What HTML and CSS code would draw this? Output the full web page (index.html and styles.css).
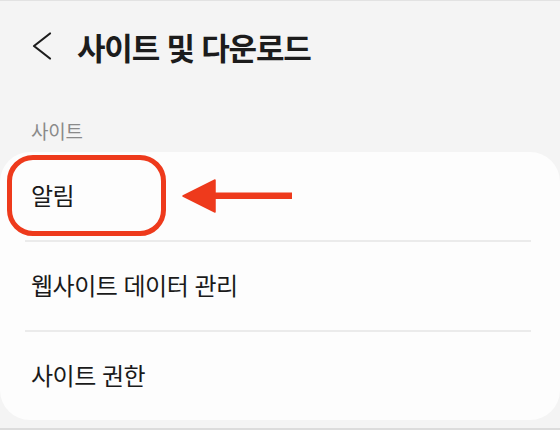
FILE: index.html
```html
<!DOCTYPE html>
<html lang="ko">
<head>
<meta charset="utf-8">
<link rel="stylesheet" href="styles.css">
</head>
<body>
<div class="page">
  <header class="header">
    <svg class="back" width="20" height="30" viewBox="0 0 20 30" aria-hidden="true">
      <path d="M18 2.5 L2 15 L18 27.5" fill="none" stroke="#1c1c1c" stroke-width="2.2" stroke-linecap="round" stroke-linejoin="round"/>
    </svg>
    <h1 class="title">사이트 및 다운로드</h1>
  </header>
  <div class="section-label">사이트</div>
  <div class="card">
    <div class="row">알림</div>
    <div class="divider"></div>
    <div class="row">웹사이트 데이터 관리</div>
    <div class="divider"></div>
    <div class="row">사이트 권한</div>
    <div class="highlight"></div>
    <svg class="arrow" width="115" height="40" viewBox="0 0 115 40" aria-hidden="true">
      <path d="M3 20 L35 4 L35 36 Z" fill="#ee3a1c" stroke="#ee3a1c" stroke-width="1.5" stroke-linejoin="round"/>
      <rect x="33" y="16.5" width="79" height="6.5" fill="#ee3a1c"/>
    </svg>
  </div>
  <div class="bottom-line"></div>
</div>
</body>
</html>
```

FILE: styles.css
```css
html, body {
  margin: 0;
  padding: 0;
  background: #f4f4f4;
}
body {
  width: 560px;
  height: 430px;
  overflow: hidden;
  font-family: "Noto Sans CJK KR", "Noto Sans", sans-serif;
  color: #1a1a1a;
}
.page {
  border-top: 1px solid #e2e2e2;
}
.header {
  display: flex;
  align-items: center;
  height: 90px;
  padding-left: 32px;
}
.back {
  display: block;
  flex: none;
}
.title {
  margin: 0 0 0 25px;
  font-size: 31px;
  font-weight: 700;
  letter-spacing: -1.2px;
  line-height: 1;
  color: #1c1c1c;
}
.section-label {
  margin-top: 30px;
  padding-left: 31px;
  font-size: 19px;
  line-height: 19px;
  color: #8a8a8a;
  letter-spacing: -0.2px;
}
.card {
  position: relative;
  margin-top: 12px;
  background: #fdfdfd;
  border-radius: 30px;
  height: 268px;
  display: flex;
  flex-direction: column;
}
.row {
  height: 88px;
  box-sizing: border-box;
  padding-bottom: 4px;
  display: flex;
  align-items: center;
  padding-left: 31px;
  font-size: 24px;
  letter-spacing: -0.5px;
  color: #1a1a1a;
}
.divider {
  height: 2px;
  margin: 0 29px 0 25px;
  background: #ebebeb;
}
.highlight {
  position: absolute;
  left: 7px;
  top: 3px;
  width: 159px;
  height: 81px;
  box-sizing: border-box;
  border: 5px solid #ee3a1c;
  border-radius: 26px;
}
.arrow {
  position: absolute;
  left: 180px;
  top: 24px;
}
.bottom-line {
  margin-top: 8px;
  height: 2px;
  background: #dcdcdc;
}
```
